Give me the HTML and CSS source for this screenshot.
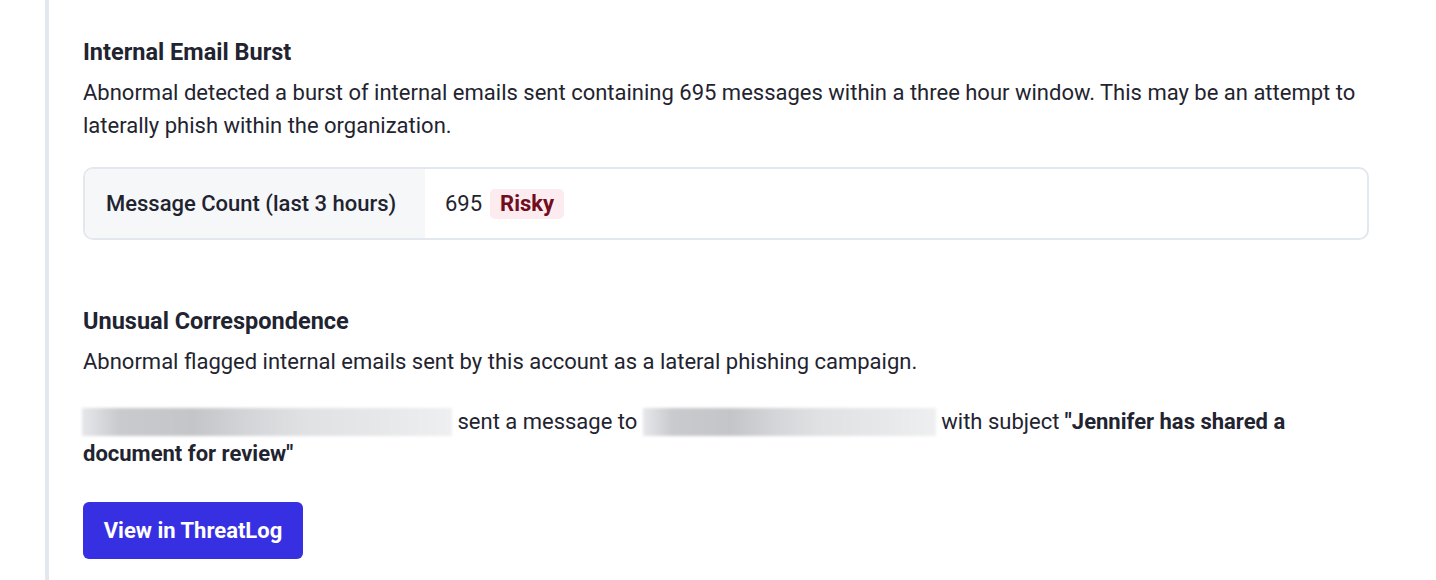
FILE: index.html
```html
<!DOCTYPE html>
<html>
<head>
<meta charset="utf-8">
<link rel="stylesheet" href="styles.css">
</head>
<body>
<div class="rail">
  <div class="content">
    <section class="block">
      <h2 class="title">Internal Email Burst</h2>
      <p class="desc">Abnormal detected a burst of internal emails sent containing 695 messages within a three hour window. This may be an attempt to laterally phish within the organization.</p>
      <div class="kv">
        <div class="kv-label">Message Count (last 3 hours)</div>
        <div class="kv-value"><span>695</span><span class="badge">Risky</span></div>
      </div>
    </section>
    <section class="block block-second">
      <h2 class="title">Unusual Correspondence</h2>
      <p class="desc">Abnormal flagged internal emails sent by this account as a lateral phishing campaign.</p>
      <p class="msg"><span class="blur blur-a"></span> sent a message to <span class="blur blur-b"></span> with subject <strong>"Jennifer has shared a document for review"</strong></p>
      <button class="btn">View in ThreatLog</button>
    </section>
  </div>
</div>
</body>
</html>
```
FILE: styles.css
```css
html, body {
  margin: 0;
  padding: 0;
  background: #ffffff;
}
body {
  font-family: Roboto, "Liberation Sans", sans-serif;
  color: #1f2430;
  font-size: 22px;
}
.rail {
  margin-left: 45px;
  border-left: 4px solid #e3e8ee;
  min-height: 580px;
  box-sizing: border-box;
  padding: 36px 0 0 34px;
}
.content {
  width: 1286px;
}
.title {
  margin: 0;
  font-size: 23.5px;
  font-weight: 700;
  line-height: 32px;
}
.desc {
  margin: 8px 0 0;
  line-height: 33px;
}
.kv {
  margin-top: 25px;
  display: flex;
  border: 2px solid #e3e8ee;
  border-radius: 10px;
  overflow: hidden;
  height: 73px;
  box-sizing: border-box;
}
.kv-label {
  width: 340px;
  background: #f6f7f9;
  display: flex;
  align-items: center;
  padding-left: 21px;
  box-sizing: border-box;
  font-weight: 500;
}
.kv-value {
  display: flex;
  align-items: center;
  padding-left: 20px;
  gap: 8px;
}
.badge {
  background: #fcecef;
  color: #710d1f;
  font-weight: 700;
  padding: 0 10px;
  line-height: 30px;
  border-radius: 5px;
}
.block-second {
  margin-top: 65px;
}
.msg {
  margin: 28px 0 0;
  line-height: 32px;
}
.msg strong {
  font-weight: 700;
}
.blur {
  display: inline-block;
  height: 28px;
  vertical-align: -7px;
  background: linear-gradient(90deg, #e6e7ea 0%, #c9cacd 10%, #c4c5c8 30%, #d4d5d8 45%, #e0e1e3 60%, #e6e7e9 80%, #eeeff0 100%);
  filter: blur(1.5px);
}
.blur-a { width: 370px; margin-left: -1px; }
.blur-b { width: 293px; }
.btn {
  margin-top: 32px;
  display: block;
  background: #3730e3;
  color: #ffffff;
  border: none;
  border-radius: 6px;
  font-family: Roboto, "Liberation Sans", sans-serif;
  font-size: 22px;
  font-weight: 700;
  width: 220px;
  height: 57px;
  padding: 0;
}
```
